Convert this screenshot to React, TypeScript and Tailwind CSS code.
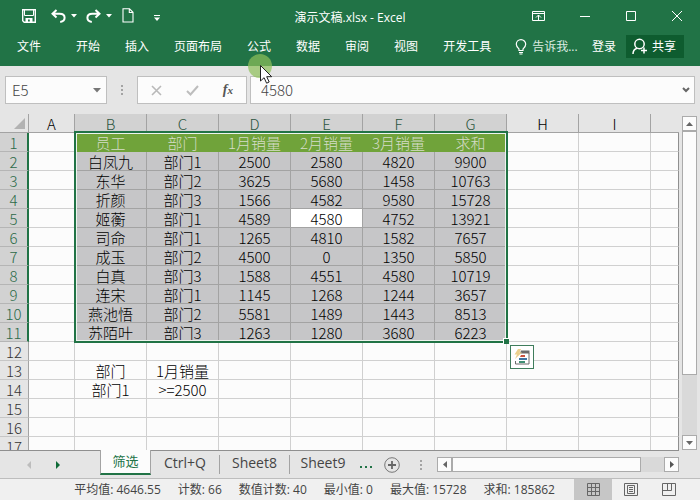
import { useState } from "react";

const sheetFont = "font-['Noto_Sans_CJK_SC',sans-serif]";

const columns = ["A", "B", "C", "D", "E", "F", "G", "H", "I", ""];

const data: string[][] = [
    ["员工", "部门", "1月销量", "2月销量", "3月销量", "求和"],
    ["白凤九", "部门1", "2500", "2580", "4820", "9900"],
    ["东华", "部门2", "3625", "5680", "1458", "10763"],
    ["折颜", "部门3", "1566", "4582", "9580", "15728"],
    ["姬蘅", "部门1", "4589", "4580", "4752", "13921"],
    ["司命", "部门1", "1265", "4810", "1582", "7657"],
    ["成玉", "部门2", "4500", "0", "1350", "5850"],
    ["白真", "部门3", "1588", "4551", "4580", "10719"],
    ["连宋", "部门1", "1145", "1268", "1244", "3657"],
    ["燕池悟", "部门2", "5581", "1489", "1443", "8513"],
    ["苏陌叶", "部门3", "1263", "1280", "3680", "6223"],
    [],
    ["部门", "1月销量"],
    ["部门1", ">=2500"],
    [],
    [],
    [],
];

const menus = ["开始", "插入", "页面布局", "公式", "数据", "审阅", "视图", "开发工具"];

const stats = [
    "平均值: 4646.55",
    "计数: 66",
    "数值计数: 40",
    "最小值: 0",
    "最大值: 15728",
    "求和: 185862",
];

const Caret = ({ className = "" }) => (
    <svg className={className} width="6" height="4" viewBox="0 0 6 4">
        <path d="M0 0h6L3 3.5z" fill="currentColor" />
    </svg>
);

const QuickAccess = () => (
    <div className="flex items-center pl-[21px]">
        <button aria-label="保存" className="mr-[14px]">
            <svg width="16" height="16" viewBox="0 0 16 16" fill="none">
                <path d="M1.7 1.7h12.6v12.6H3.2l-1.5-1.5z" stroke="white" strokeWidth="1.4" />
                <path d="M3.500 2v5.500h9V2" stroke="white" strokeWidth="1" />
                <path d="M4.500 10h7v4H8.800v-2.400H7V14H4.500z" fill="white" />
            </svg>
        </button>
        <button aria-label="撤消" className="flex items-center gap-[5px]">
            <svg width="15" height="14" viewBox="0 0 15 14" fill="none" stroke="white" strokeWidth="2">
                <path d="M5.5 1 1.5 4.8l4 3.7M2 4.8h6.6c3 0 5 1.5 5 4 0 2.2-1.6 3.8-4.4 4.2" />
            </svg>
            <Caret />
        </button>
        <button aria-label="恢复" className="flex items-center gap-[5px] ml-[9px]">
            <svg width="15" height="14" viewBox="0 0 15 14" fill="none" stroke="white" strokeWidth="2">
                <path d="m9.500 1 4 3.800-4 3.700M13 4.800H6.400c-3 0-5 1.500-5 4 0 2.200 1.600 3.800 4.400 4.200" />
            </svg>
            <Caret />
        </button>
        <button aria-label="新建" className="ml-[10px]">
            <svg width="12" height="15" viewBox="0 0 12 15" fill="none" stroke="white" strokeWidth="1.1">
                <path d="M1 .8h6.500L11 4.300V14H1zM7.300 1v3.500H11" />
            </svg>
        </button>
        <button aria-label="自定义快速访问工具栏" className="ml-[20px] mt-1">
            <svg width="6" height="6" viewBox="0 0 6 6" fill="white">
                <path d="M0 0h6v1H0zM0 2.500h6L3 6z" />
            </svg>
        </button>
    </div>
);

const WindowButtons = () => (
    <div className="flex items-center justify-end gap-[34px] pr-[17px]">
        <button aria-label="功能区显示选项">
            <svg width="14" height="12" viewBox="0 0 14 12" fill="none" stroke="white">
                <path d="M.5 1.500h12v9H.5zM.5 3.500h12M6.500 10V5M4 7.500 6.500 5 9 7.500" />
            </svg>
        </button>
        <button aria-label="最小化">
            <svg width="11" height="12" viewBox="0 0 11 12">
                <path d="M0 6.500h10" stroke="white" />
            </svg>
        </button>
        <button aria-label="最大化">
            <svg width="12" height="12" viewBox="0 0 12 12">
                <path d="M1.500 1.500h9v9h-9z" fill="none" stroke="white" />
            </svg>
        </button>
        <button aria-label="关闭">
            <svg width="12" height="12" viewBox="0 0 12 12">
                <path d="m1 1 10 10M11 1 1 11" stroke="white" />
            </svg>
        </button>
    </div>
);

const Ribbon = () => (
    <header className="h-[66px] shrink-0 bg-[#217346] text-white text-[12px]">
        <div className="grid grid-cols-[1fr_auto_1fr] h-[31px]">
            <QuickAccess />
            <h1 className="self-center pt-1">演示文稿.xlsx - Excel</h1>
            <WindowButtons />
        </div>
        <div className="flex items-center h-[31px] pl-[17px] pr-4 whitespace-nowrap">
            <button>文件</button>
            <nav className="flex gap-[25px] ml-[35px]">
                {menus.map((item) => (
                    <button key={item}>{item}</button>
                ))}
            </nav>
            <button className="flex items-center gap-[5px] ml-6 text-[#dcebe2]">
                <svg width="12" height="16" viewBox="0 0 12 16" fill="none" stroke="white" strokeWidth="1.200">
                    <path d="M4 11.500V10C2.500 8.500 1.300 7.500 1.300 5.300a4.700 4.700 0 0 1 9.400 0C10.700 7.500 9.500 8.500 8 10v1.500zM4 13.500h4M4.500 15h3" />
                </svg>
                告诉我...
            </button>
            <div className="flex items-center ml-auto">
                <button>登录</button>
                <button className="flex items-center gap-1 h-[23px] ml-[10px] pl-[6px] pr-2 bg-[#0e5c2f]">
                    <svg width="16" height="17" viewBox="0 0 16 17" fill="none" stroke="white" strokeWidth="1.500">
                        <circle cx="7.500" cy="6" r="4.700" />
                        <path d="M1 16c0-3 1.500-5 4-5.800M12 9.500v6M9 12.500h6" />
                    </svg>
                    共享
                </button>
            </div>
        </div>
    </header>
);

const Dots = () => (
    <svg className="shrink-0" width="2" height="12" viewBox="0 0 2 12" fill="#a3a3a3">
        <path d="M0 1h2v2H0zM0 5h2v2H0zM0 9h2v2H0z" />
    </svg>
);

const FormulaBar = () => {
    const [value, setValue] = useState("4580");
    return (
        <div className={`flex items-center h-11 shrink-0 pt-1 px-[5px] text-[#444] ${sheetFont}`}>
            <div className="flex items-center w-[102px] h-[28px] border border-[#bfbfbf] bg-[#fcfcfc]">
                <input
                    aria-label="名称框"
                    defaultValue="E5"
                    className="w-0 grow pl-[6px] bg-transparent text-[15px] font-light outline-none"
                />
                <button aria-label="选择名称" className="mr-[5px] text-[#777]">
                    <svg width="8" height="5" viewBox="0 0 8 5">
                        <path d="M0 0h8L4 4.500z" fill="currentColor" />
                    </svg>
                </button>
            </div>
            <div className="mx-[14px]">
                <Dots />
            </div>
            <div className="flex items-center justify-between w-[110px] h-[28px] px-[13px] border border-[#bfbfbf] bg-[#fcfcfc]">
                <button aria-label="取消">
                    <svg width="11" height="11" viewBox="0 0 11 11">
                        <path d="m1 1 9 9M10 1 1 10" stroke="#b9b9b9" strokeWidth="1.600" />
                    </svg>
                </button>
                <button aria-label="输入">
                    <svg width="13" height="11" viewBox="0 0 13 11">
                        <path d="m1 6 3.500 3.500L12 1" fill="none" stroke="#bdbdbd" strokeWidth="2" />
                    </svg>
                </button>
                <button
                    aria-label="插入函数"
                    className="font-['Liberation_Serif',serif] italic font-bold text-[14px] leading-4 text-[#555]"
                >
                    f<span className="text-[11px]">x</span>
                </button>
            </div>
            <div className="flex grow items-center h-[28px] ml-[3px] border border-[#bfbfbf] bg-[#fcfcfc]">
                <input
                    aria-label="编辑栏"
                    value={value}
                    onChange={(e) => setValue(e.target.value)}
                    className="w-0 grow pl-[10px] bg-transparent text-[15px] font-light outline-none"
                />
                <button aria-label="展开编辑栏" className="mr-1">
                    <svg width="8" height="6" viewBox="0 0 8 6">
                        <path d="m1 1 3 3 3-3" fill="none" stroke="#666" strokeWidth="2" />
                    </svg>
                </button>
            </div>
        </div>
    );
};

const cellStyle = (row: number, col: number) => {
    if (row > 10 || col < 1 || col > 6) return "bg-[#fcfcfc] border-[#d0d0d0]";
    if (row === 0) return "bg-[#70a33a] border-[#70a33a] text-[#d5dcc8]";
    if (row === 4 && col === 4) return "bg-white border-[#a3a3a3]";
    return "bg-[#c6c6c8] border-[#a3a3a3]";
};

const Grid = () => (
    <div className="relative grow min-w-0 pt-1 overflow-hidden">
        <table
            className={`w-full table-fixed border-separate border-spacing-0 text-[15px] leading-[16px] text-center text-black font-light whitespace-nowrap ${sheetFont}`}
        >
            <colgroup>
                <col className="w-[29px]" />
                <col className="w-[46px]" />
                {columns.slice(1, 9).map((name) => (
                    <col key={name} className="w-[72px]" />
                ))}
                <col />
            </colgroup>
            <thead>
                <tr>
                    <th className="h-[19px] p-0 border-r border-b border-[#a3a3a3]">
                        <svg className="ml-[14px]" width="11" height="11" viewBox="0 0 11 11">
                            <path d="M11 0v11H0z" fill="#b2b2b2" />
                        </svg>
                    </th>
                    {columns.map((name, col) => (
                        <th
                            key={col}
                            scope="col"
                            className={`h-[19px] p-0 pt-[2px] border-b border-[#a3a3a3] font-light ${
                                col < 9 ? "border-r" : ""
                            } ${col > 0 && col < 7 ? "bg-[#d2d2d2] text-[#2c5540]" : ""}`}
                        >
                            {name}
                        </th>
                    ))}
                </tr>
            </thead>
            <tbody>
                {data.map((values, row) => (
                    <tr key={row}>
                        <th
                            scope="row"
                            className={`h-[19px] p-0 pt-[2px] border-b font-light ${
                                row < 11
                                    ? "bg-[#d2d2d2] text-[#2c6a48] border-r-2 border-r-[#217346] border-b-[#b5b5b5]"
                                    : "text-[#333] border-r border-r-[#a3a3a3] border-b-[#c6c6c6]"
                            }`}
                        >
                            {row + 1}
                        </th>
                        {columns.map((_, col) => (
                            <td
                                key={col}
                                className={`h-[19px] p-0 pt-[2px] border-r border-b ${cellStyle(row, col)} ${
                                    col === 9 ? "border-r-[#8f8f8f]" : ""
                                }`}
                            >
                                {col > 0 ? values[col - 1] : ""}
                            </td>
                        ))}
                    </tr>
                ))}
            </tbody>
        </table>

        {/* selected range B1:G11 */}
        <div className="absolute left-[74px] top-[21px] w-[434px] h-[212px] border-2 border-[#217346] pointer-events-none">
            <div className="h-full border border-[#eef3ee]"></div>
            <div className="absolute -right-[3px] -bottom-[3px] size-[6px] border-t border-l border-white bg-[#217346]"></div>
        </div>

        <button
            aria-label="快速分析"
            className="absolute left-[510px] top-[235px] flex justify-center items-center size-6 border border-[#3f7d5c] bg-white"
        >
            <svg width="16" height="16" viewBox="0 0 16 16">
                <path d="M7 1.500h8.500v3H6z" fill="#6b6b6b" />
                <path d="M15 4v11H1.500v-3" fill="none" stroke="#6b6b6b" />
                <path d="M4 0h3L5.500 3.500H8L1 10l2-4.500H.5z" fill="#ecd08d" />
                <path d="M7 6h4v2H6z" fill="#c8513f" />
                <path d="M5 9h8v2H5z" fill="#3f74a3" />
                <path d="M5 12h6v2H5z" fill="#3f8f74" />
            </svg>
        </button>
    </div>
);

const VerticalScroll = () => (
    <div className="flex flex-col w-[15px] shrink-0 mx-[3px] mt-[6px] bg-[#d9d9d9]">
        <button
            aria-label="向上滚动"
            className="flex justify-center items-center h-[15px] shrink-0 border border-[#ababab] bg-[#fcfcfc]"
        >
            <svg width="7" height="4" viewBox="0 0 7 4">
                <path d="M0 4h7L3.500 0z" fill="#666" />
            </svg>
        </button>
        <div className="grow-[4] border border-[#ababab] bg-[#fcfcfc]"></div>
        <div className="grow"></div>
        <button
            aria-label="向下滚动"
            className="flex justify-center items-center h-[15px] shrink-0 border border-[#ababab] bg-[#fcfcfc]"
        >
            <svg width="7" height="4" viewBox="0 0 7 4">
                <path d="M0 0h7L3.500 4z" fill="#666" />
            </svg>
        </button>
    </div>
);

const SheetTabs = () => (
    <div className="flex h-[28px] shrink-0 text-[14px] text-[#444] whitespace-nowrap">
        <div className="flex items-center grow min-w-0 border-t border-[#8f8f8f] mr-[21px]">
            <button aria-label="上一张工作表" className="ml-[27px]">
                <svg width="4" height="8" viewBox="0 0 4 8">
                    <path d="M4 0v8L0 4z" fill="#bdbdbd" />
                </svg>
            </button>
            <button aria-label="下一张工作表" className="ml-[25px]">
                <svg width="4" height="8" viewBox="0 0 4 8">
                    <path d="M0 0v8l4-4z" fill="#0e6b37" />
                </svg>
            </button>
            <button className="self-start w-[51px] h-[25px] ml-[40px] -mt-px border-x border-b-2 border-x-[#a3a3a3] border-b-[#217346] bg-[#fcfcfc] text-[13px] text-[#217346]">
                筛选
            </button>
            <button className="w-[68px] pb-1">Ctrl+Q</button>
            <div className="w-px h-[19px] bg-[#a3a3a3]"></div>
            <button className="w-[69px] pb-1">Sheet8</button>
            <div className="w-px h-[19px] bg-[#a3a3a3]"></div>
            <button className="w-[66px] pb-1">Sheet9</button>
            <button aria-label="更多工作表" className="ml-1 mt-1">
                <svg width="12" height="2" viewBox="0 0 12 2">
                    <path d="M0 0h2v2H0zM5 0h2v2H5zM10 0h2v2h-2z" fill="#217346" />
                </svg>
            </button>
            <button aria-label="新工作表" className="ml-[12px]">
                <svg width="16" height="16" viewBox="0 0 16 16" fill="none">
                    <circle cx="8" cy="8" r="7.300" stroke="#777" />
                    <path d="M8 4v8M4 8h8" stroke="#666" strokeWidth="1.800" />
                </svg>
            </button>
            <div className="ml-5">
                <Dots />
            </div>
            <div className="flex grow h-[15px] ml-[15px] bg-[#d9d9d9]">
                <button
                    aria-label="向左滚动"
                    className="flex justify-center items-center w-[15px] border border-[#ababab] bg-[#fcfcfc]"
                >
                    <svg width="4" height="7" viewBox="0 0 4 7">
                        <path d="M4 0v7L0 3.500z" fill="#666" />
                    </svg>
                </button>
                <div className="grow-[8] border border-[#ababab] bg-[#fcfcfc]"></div>
                <div className="grow"></div>
                <button
                    aria-label="向右滚动"
                    className="flex justify-center items-center w-[15px] border border-[#ababab] bg-[#fcfcfc]"
                >
                    <svg width="4" height="7" viewBox="0 0 4 7">
                        <path d="M0 0v7l4-3.500z" fill="#555" />
                    </svg>
                </button>
            </div>
        </div>
    </div>
);

const StatusBar = () => (
    <footer className="flex justify-end h-[22px] shrink-0 pr-3 border-t border-[#bdbdbd] bg-[#f0f0f0] text-[12px] text-[#444] whitespace-nowrap">
        <div className="flex items-center gap-[17px] mr-[19px]">
            {stats.map((stat) => (
                <span key={stat}>{stat}</span>
            ))}
        </div>
        <button aria-label="普通" className="flex justify-center items-center w-[38px] bg-[#c6c6c6]">
            <svg width="13" height="13" viewBox="0 0 13 13" fill="none" stroke="#666">
                <path d="M.5.5h12v12H.5zM4.500.5v12M8.500.5v12M.5 4.500h12M.5 8.500h12" />
            </svg>
        </button>
        <button aria-label="页面布局视图" className="flex justify-center items-center w-[38px]">
            <svg width="14" height="13" viewBox="0 0 14 13" fill="none" stroke="#666">
                <path d="M.5.5h13v12H.5zM3.500 2.500h7v8h-7zM5 4.500h4M5 6.500h4M5 8.500h4" />
            </svg>
        </button>
        <button aria-label="分页预览" className="flex justify-center items-center w-[38px]">
            <svg width="14" height="13" viewBox="0 0 14 13" fill="none" stroke="#666">
                <path d="M.5.5h13v12H.5zM5.500.5v7M1 7.500h8.500V.5" />
            </svg>
        </button>
    </footer>
);

const App = () => (
    <div className="relative flex flex-col h-screen overflow-hidden bg-[#e5e5e5] font-['Open_Sans','Noto_Sans_CJK_SC',sans-serif]">
        <Ribbon />
        <FormulaBar />
        <main className="flex grow min-h-0">
            <Grid />
            <VerticalScroll />
        </main>
        <SheetTabs />
        <StatusBar />

        {/* mouse pointer with click halo */}
        <div className="absolute left-[248px] top-[53px] pointer-events-none">
            <svg width="26" height="32" viewBox="0 0 26 32">
                <circle cx="12" cy="13" r="12" fill="#8fc05a" opacity="0.700" />
                <path
                    d="M12.500 12.500v15.500l3.600-3.300 2.500 5.500 2.600-1.200-2.500-5.300h5z"
                    fill="white"
                    stroke="#222"
                />
            </svg>
        </div>
    </div>
);

export default App;
